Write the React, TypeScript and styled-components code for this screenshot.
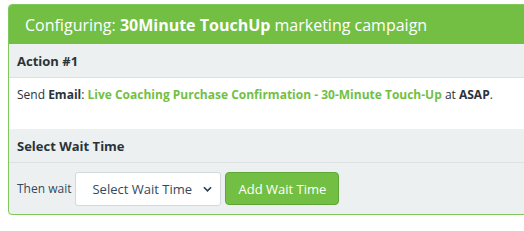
import styled, { createGlobalStyle } from 'styled-components';

const GlobalStyle = createGlobalStyle`
  body {
    margin: 0;
    padding: 4px 0 0 8px;
    overflow: hidden;
    background: #fff;
    font-family: 'Open Sans', 'Liberation Sans', sans-serif;
  }
`;

export default function App() {
  return (
    <>
      <GlobalStyle />
      <Panel>
        <Heading>
          Configuring: <strong>30Minute TouchUp</strong> marketing campaign
        </Heading>
        <SectionTitle>Action #1</SectionTitle>
        <ActionBody>
          Send <b>Email</b>:{' '}
          <Highlight>Live Coaching Purchase Confirmation - 30-Minute Touch-Up</Highlight> at{' '}
          <b>ASAP</b>.
        </ActionBody>
        <SectionTitle>Select Wait Time</SectionTitle>
        <WaitRow>
          <Label>Then wait</Label>
          <SelectWrap>
            <Select defaultValue="">
              <option value="">Select Wait Time</option>
            </Select>
            <Chevron viewBox="0 0 10 6">
              <path d="M1 1l4 4 4-4" fill="none" stroke="#2c3e50" strokeWidth="1.8" />
            </Chevron>
          </SelectWrap>
          <AddButton>Add Wait Time</AddButton>
        </WaitRow>
      </Panel>
    </>
  );
}

const Panel = styled.section`
  width: 540px;
  border: 1px solid #7dc95e;
  border-radius: 4px;
  overflow: hidden;
  background: #ecf0f1;
`;

const Heading = styled.h1`
  margin: 0;
  height: 39px;
  padding: 0 16px;
  display: flex;
  align-items: center;
  background: #72bf44;
  color: #fff;
  font-size: 16px;
  font-weight: 400;
  white-space: pre;

  strong {
    font-weight: 700;
  }
`;

const SectionTitle = styled.div`
  height: 33px;
  padding: 0 8px;
  display: flex;
  align-items: center;
  border-bottom: 1px solid #dde1e3;
  color: #2b3339;
  font-size: 13px;
  font-weight: 700;
`;

const ActionBody = styled.div`
  height: 51px;
  padding: 9px 8px 0;
  box-sizing: border-box;
  background: #fff;
  color: #2b3339;
  font-size: 12px;
  line-height: 16px;
  white-space: pre;

  b {
    font-weight: 700;
  }
`;

const Highlight = styled.span`
  color: #72bf44;
  font-weight: 700;
`;

const WaitRow = styled.div`
  height: 51px;
  padding: 0 8px;
  display: flex;
  align-items: center;
  gap: 4px;
`;

const Label = styled.span`
  color: #34495e;
  font-size: 12px;
`;

const SelectWrap = styled.div`
  position: relative;
`;

const Select = styled.select`
  appearance: none;
  width: 146px;
  height: 34px;
  padding: 0 24px 0 16px;
  border: 1px solid #d6d9db;
  border-radius: 3px;
  background: #fff;
  color: #34495e;
  font-family: 'Open Sans', 'Liberation Sans', sans-serif;
  font-size: 13px;
`;

const Chevron = styled.svg`
  position: absolute;
  right: 9px;
  top: 14px;
  width: 9px;
  height: 6px;
  pointer-events: none;
`;

const AddButton = styled.button`
  height: 33px;
  padding: 0 12px;
  border: 1px solid #5fa838;
  border-radius: 4px;
  background: #72bf44;
  color: #fff;
  font-family: 'Open Sans', 'Liberation Sans', sans-serif;
  font-size: 13px;
`;
